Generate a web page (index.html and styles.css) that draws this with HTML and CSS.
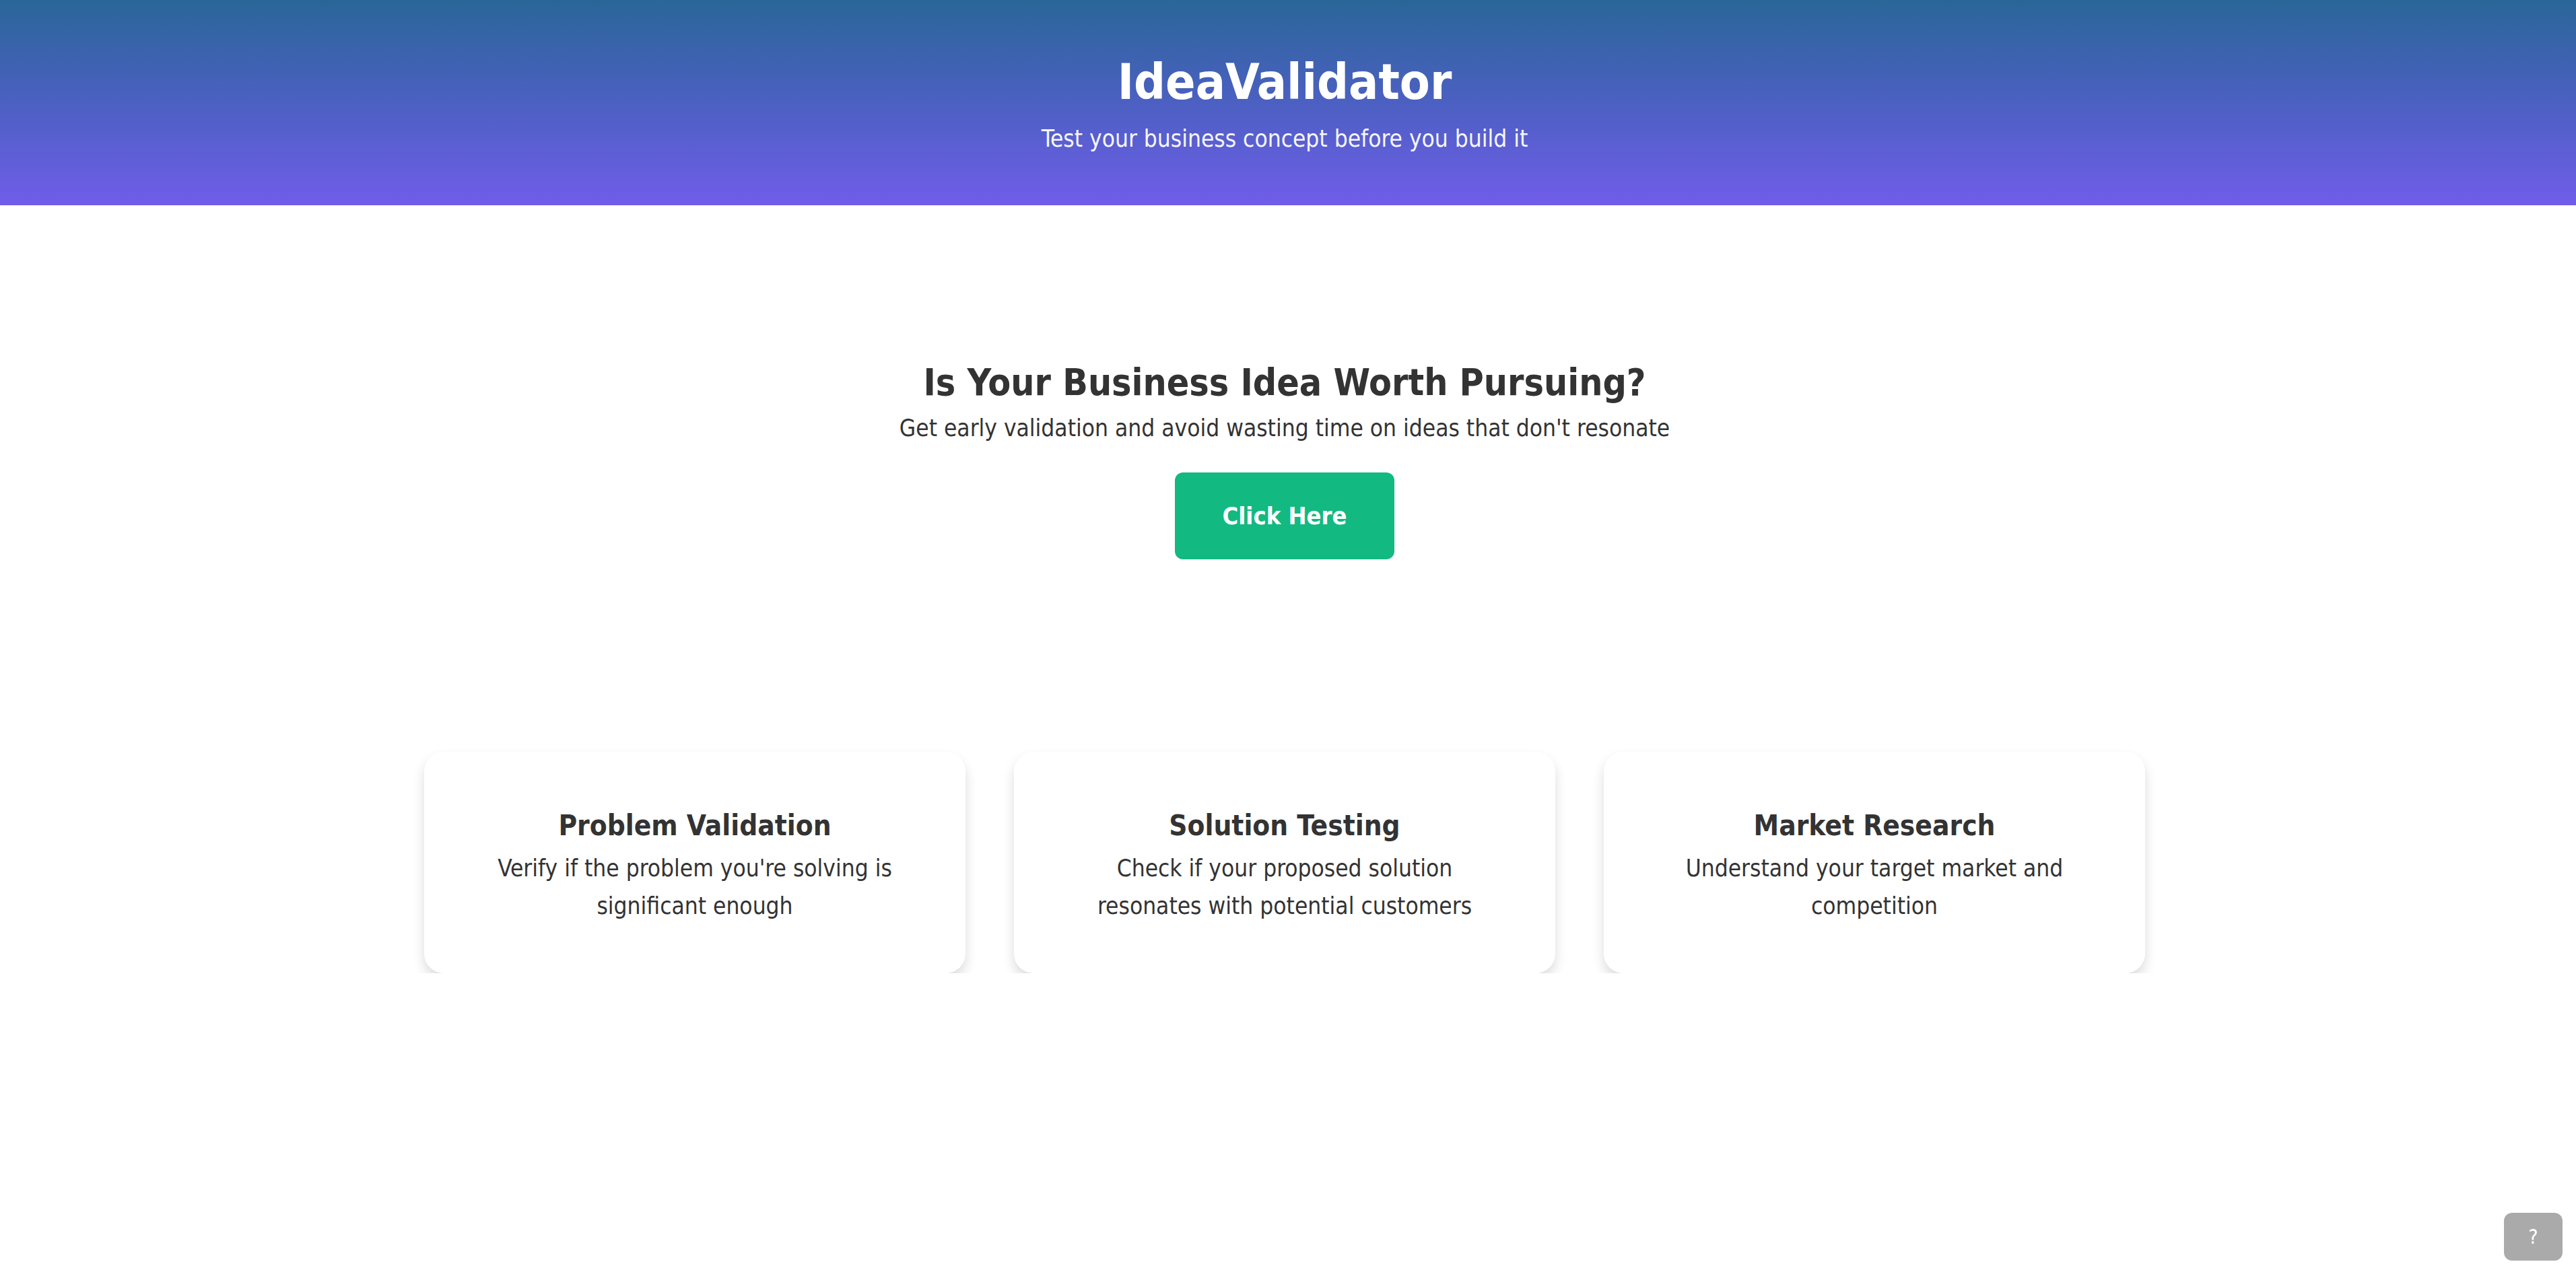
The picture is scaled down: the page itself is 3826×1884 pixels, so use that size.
FILE: index.html
```html
<!DOCTYPE html>
<html lang="en">
<head>
<meta charset="utf-8">
<title>IdeaValidator</title>
<link rel="stylesheet" href="styles.css">
</head>
<body>
<header class="site-header">
  <h1 class="brand">IdeaValidator</h1>
  <p class="tagline">Test your business concept before you build it</p>
</header>
<main class="page">
  <section class="hero">
    <h2 class="hero-title">Is Your Business Idea Worth Pursuing?</h2>
    <p class="hero-text">Get early validation and avoid wasting time on ideas that don't resonate</p>
    <button class="cta" type="button">Click Here</button>
  </section>
  <section class="features">
    <div class="card">
      <h3 class="card-title">Problem Validation</h3>
      <p class="card-text">Verify if the problem you're solving is significant enough</p>
    </div>
    <div class="card">
      <h3 class="card-title">Solution Testing</h3>
      <p class="card-text">Check if your proposed solution resonates with potential customers</p>
    </div>
    <div class="card">
      <h3 class="card-title">Market Research</h3>
      <p class="card-text">Understand your target market and competition</p>
    </div>
  </section>
</main>
<button class="help" type="button">?</button>
</body>
</html>
```
FILE: styles.css
```css
html, body {
  margin: 0;
  padding: 0;
  background: #ffffff;
}
body {
  font-family: "DejaVu Sans Condensed", "DejaVu Sans", sans-serif;
  font-stretch: condensed;
  color: #333333;
}
.site-header {
  background: linear-gradient(to bottom, #2a6698 0%, #4c60c2 50%, #705de9 100%);
  color: #ffffff;
  text-align: center;
  padding: 79px 10px 74px 0;
}
.brand {
  margin: 0 0 16px;
  font-size: 73px;
  line-height: 86px;
  font-weight: 700;
}
.tagline {
  margin: 0;
  font-size: 35px;
  line-height: 50px;
  opacity: 0.95;
}
.page {
  padding: 0 10px 0 0;
}
.hero {
  text-align: center;
  padding-top: 230px;
}
.hero-title {
  margin: 0 0 11px;
  font-size: 55px;
  line-height: 66px;
  font-weight: 700;
  color: #333333;
}
.hero-text {
  margin: 0 0 42px;
  font-size: 35px;
  line-height: 48px;
  color: #333333;
}
.cta {
  font-family: inherit;
  font-stretch: condensed;
  font-size: 36px;
  line-height: 43px;
  font-weight: 700;
  color: #ffffff;
  background: #12b981;
  border: none;
  border-radius: 12px;
  padding: 43px 71px;
  cursor: pointer;
}
.features {
  display: grid;
  grid-template-columns: repeat(3, 804px);
  gap: 72px;
  justify-content: center;
  margin-top: 286px;
}
.card {
  background: #ffffff;
  border-radius: 29px;
  box-shadow: 0 10px 18px rgba(0, 0, 0, 0.14);
  padding: 84px 78px 72px;
  text-align: center;
  height: 329px;
  box-sizing: border-box;
}
.card-title {
  margin: 0 0 9px;
  font-size: 42px;
  line-height: 52px;
  font-weight: 700;
  color: #333333;
}
.card-text {
  margin: 0;
  font-size: 35px;
  line-height: 56px;
  color: #333333;
}
.help {
  position: fixed;
  right: 20px;
  bottom: 11px;
  width: 87px;
  height: 71px;
  border: none;
  border-radius: 12px;
  background: #aaaaaa;
  color: #ffffff;
  font-family: inherit;
  font-size: 30px;
  line-height: 71px;
  padding: 0;
}
```
